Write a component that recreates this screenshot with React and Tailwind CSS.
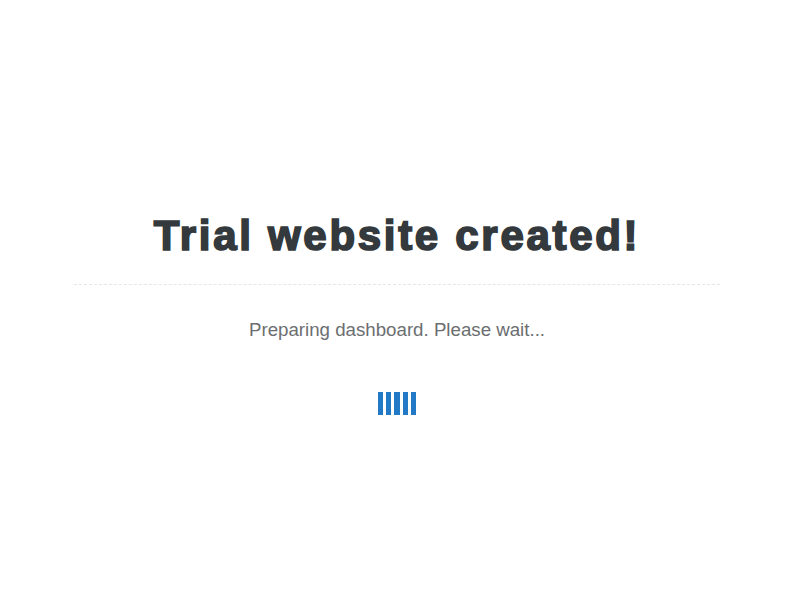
export default function App() {
  return (
    <div className="w-[794px] h-[600px] bg-white flex flex-col items-center" style={{ fontFamily: '"Liberation Sans", Arial, sans-serif' }}>
      <h1 className="mt-[215px] text-[42px] leading-none font-bold text-[#33393c] tracking-[2.7px] [-webkit-text-stroke:1.7px_#33393c]">
        Trial website created!
      </h1>
      <div className="mt-[27px] w-[646px] border-t border-dashed border-[#e6e6e6]" />
      <p className="mt-[36px] text-[18.7px] leading-none text-[#6b6e70]">
        Preparing dashboard. Please wait...
      </p>
      <div className="mt-[52px] flex gap-[2.8px] h-[23px]">
        <div className="w-[5.5px] bg-[#2279c5]" />
        <div className="w-[5.5px] bg-[#2279c5]" />
        <div className="w-[5.5px] bg-[#2279c5]" />
        <div className="w-[5.5px] bg-[#2279c5]" />
        <div className="w-[5.5px] bg-[#2279c5]" />
      </div>
    </div>
  );
}
